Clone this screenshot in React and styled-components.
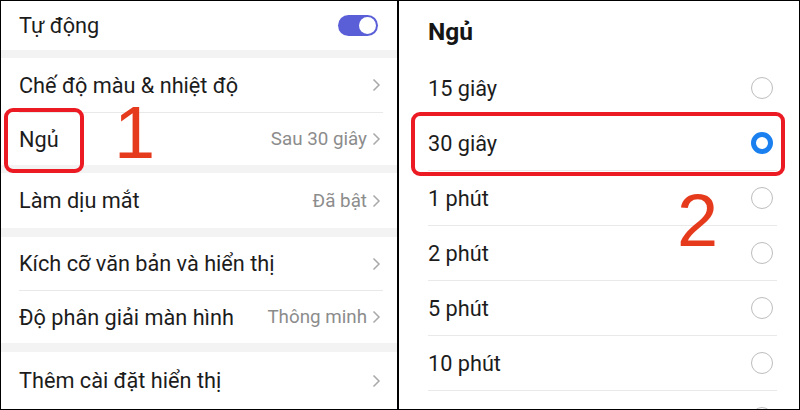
import React from "react";
import styled, { createGlobalStyle } from "styled-components";

const Global = createGlobalStyle`
  html, body { margin: 0; padding: 0; background: #fff; }
  body { font-family: Roboto, "Noto Sans", "DejaVu Sans", sans-serif; }
`;

const Frame = styled.div`
  position: relative;
  width: 800px;
  height: 410px;
  box-sizing: border-box;
  border: 1px solid #000;
  display: grid;
  grid-template-columns: 396px 2px 400px;
  background: #fff;
  overflow: hidden;
`;

const Split = styled.div`
  background: #000;
`;

const Panel = styled.div`
  position: relative;
  display: flex;
  flex-direction: column;
  overflow: hidden;
`;

const Band = styled.div`
  height: ${(p) => p.h || 8}px;
  background: #f3f3f3;
  flex: none;
`;

const Row = styled.div`
  height: ${(p) => p.h}px;
  flex: none;
  display: flex;
  align-items: center;
  justify-content: space-between;
  padding: 0 16px 0 18px;
  box-sizing: border-box;
`;

const Divider = styled.div`
  height: 1px;
  flex: none;
  margin: 0 ${(p) => p.right || 14}px 0 ${(p) => p.left || 18}px;
  background: #e9e9e9;
`;

const Label = styled.span`
  font-size: 21.7px;
  color: #1c1c1c;
`;

const Right = styled.span`
  display: flex;
  align-items: center;
  gap: 5px;
`;

const Value = styled.span`
  font-size: 18.8px;
  color: #8c8c8c;
`;

const Toggle = styled.span`
  position: relative;
  width: 40px;
  height: 21px;
  border-radius: 11px;
  background: #5a5fd8;
  margin-right: 3px;
  &::after {
    content: "";
    position: absolute;
    right: 2px;
    top: 2px;
    width: 17px;
    height: 17px;
    border-radius: 50%;
    background: #fff;
  }
`;

const Title = styled.div`
  height: 60px;
  flex: none;
  display: flex;
  align-items: center;
  padding-left: 29px;
  font-size: 24.5px;
  font-weight: 700;
  color: #151515;
`;

const Option = styled.div`
  height: 54px;
  flex: none;
  display: flex;
  align-items: center;
  justify-content: space-between;
  padding: 0 26px 0 29px;
`;

const Radio = styled.span`
  width: 22px;
  height: 22px;
  box-sizing: border-box;
  border-radius: 50%;
  border: ${(p) => (p.on ? "5px solid #1a80f0" : "1.5px solid #bdbdbd")};
  background: #fff;
`;

const Mark = styled.div`
  position: absolute;
  left: ${(p) => p.x}px;
  top: ${(p) => p.y}px;
  width: ${(p) => p.w}px;
  height: ${(p) => p.h}px;
  box-sizing: border-box;
  border: 4px solid #ec1a22;
  border-radius: 9px;
  pointer-events: none;
`;

const Digit = styled.div`
  position: absolute;
  left: ${(p) => p.x}px;
  top: ${(p) => p.y}px;
  font-family: "Liberation Sans", Arial, sans-serif;
  font-size: 74px;
  line-height: 1;
  color: #e63a1d;
`;

const Chevron = () => (
  <svg width="9" height="14" viewBox="0 0 9 14">
    <path d="M1.5 1.5 L7 7 L1.5 12.5" fill="none" stroke="#a9a9a9" strokeWidth="1.5" />
  </svg>
);

const options = [
  ["15 giây", false],
  ["30 giây", true],
  ["1 phút", false],
  ["2 phút", false],
  ["5 phút", false],
  ["10 phút", false],
  ["", false],
];

export default function App() {
  return (
    <>
      <Global />
      <Frame>
        <Panel>
          <Row h={49}>
            <Label>Tự động</Label>
            <Toggle />
          </Row>
          <Band h={8} />
          <Row h={54}>
            <Label>Chế độ màu &amp; nhiệt độ</Label>
            <Right><Chevron /></Right>
          </Row>
          <Divider />
          <Row h={52}>
            <Label>Ngủ</Label>
            <Right><Value>Sau 30 giây</Value><Chevron /></Right>
          </Row>
          <Band h={8} />
          <Row h={55}>
            <Label>Làm dịu mắt</Label>
            <Right><Value>Đã bật</Value><Chevron /></Right>
          </Row>
          <Band h={9} />
          <Row h={53}>
            <Label>Kích cỡ văn bản và hiển thị</Label>
            <Right><Chevron /></Right>
          </Row>
          <Divider />
          <Row h={52}>
            <Label>Độ phân giải màn hình</Label>
            <Right><Value>Thông minh</Value><Chevron /></Right>
          </Row>
          <Band h={9} />
          <Row h={57}>
            <Label>Thêm cài đặt hiển thị</Label>
            <Right><Chevron /></Right>
          </Row>
          <Mark x={3} y={107} w={80} h={65} />
          <Digit x={113} y={95}>1</Digit>
        </Panel>
        <Split />
        <Panel>
          <Title>Ngủ</Title>
          {options.map(([t, on], i) => (
            <React.Fragment key={i}>
              {i > 0 && <Divider left={29} right={22} />}
              <Option>
                <Label>{t}</Label>
                <Radio on={on ? 1 : 0} />
              </Option>
            </React.Fragment>
          ))}
          <Mark x={12} y={111} w={374} h={64} />
          <Digit x={278} y={183}>2</Digit>
        </Panel>
      </Frame>
    </>
  );
}
